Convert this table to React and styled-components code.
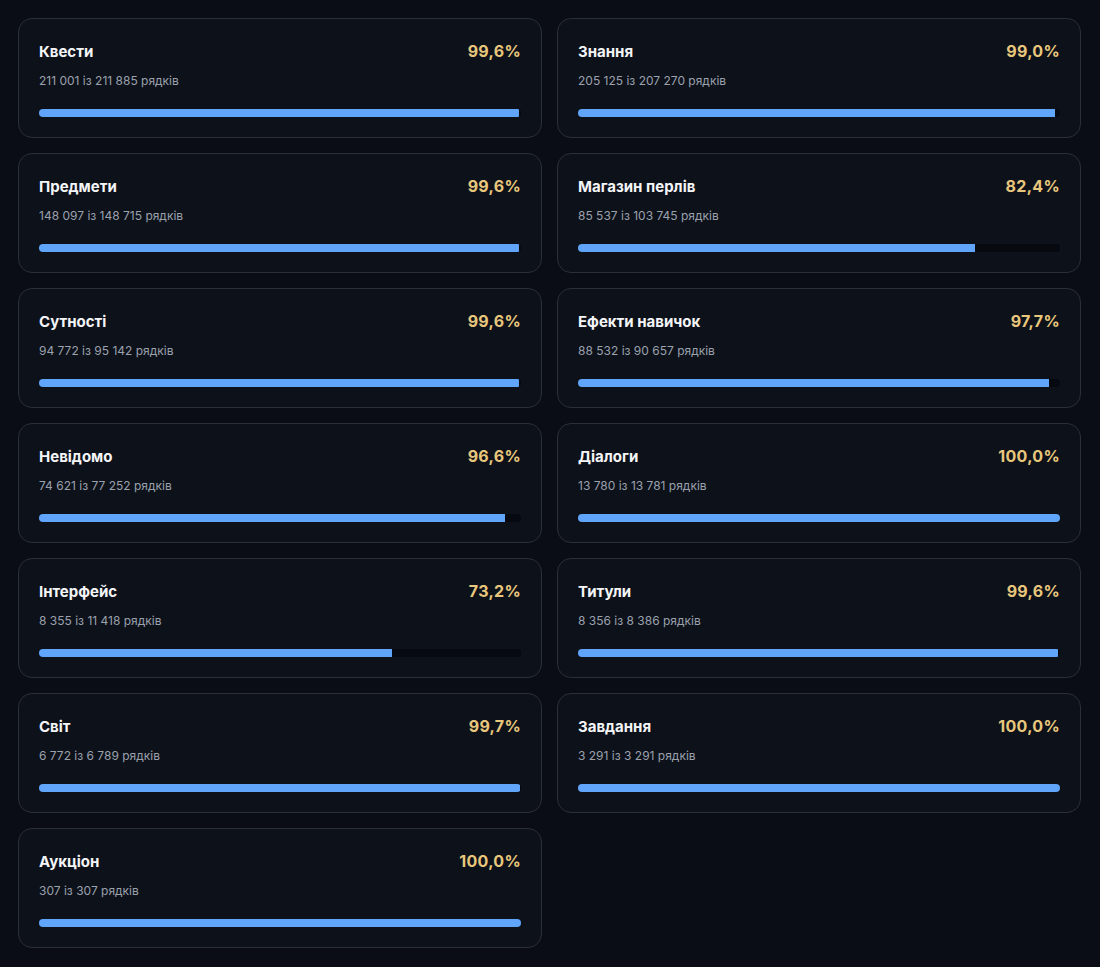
import React from 'react';
import styled, { createGlobalStyle } from 'styled-components';

const GlobalStyle = createGlobalStyle`
  html, body {
    margin: 0;
    background: #0a0d15;
  }
  body {
    font-family: Inter, "Noto Sans", sans-serif;
    color: #fff;
  }
`;

const data = [
  ['Квести', '211 001', '211 885', 99.6],
  ['Знання', '205 125', '207 270', 99.0],
  ['Предмети', '148 097', '148 715', 99.6],
  ['Магазин перлів', '85 537', '103 745', 82.4],
  ['Сутності', '94 772', '95 142', 99.6],
  ['Ефекти навичок', '88 532', '90 657', 97.7],
  ['Невідомо', '74 621', '77 252', 96.6],
  ['Діалоги', '13 780', '13 781', 100.0],
  ['Інтерфейс', '8 355', '11 418', 73.2],
  ['Титули', '8 356', '8 386', 99.6],
  ['Світ', '6 772', '6 789', 99.7],
  ['Завдання', '3 291', '3 291', 100.0],
  ['Аукціон', '307', '307', 100.0],
];

const Page = styled.div`
  padding: 18px 19px 19px 18px;
`;

const Grid = styled.div`
  display: grid;
  grid-template-columns: 524px 524px;
  gap: 15px;
`;

const Card = styled.div`
  background: #0d111a;
  border: 1px solid #2a2f39;
  border-radius: 14px;
  padding: 20px;
  box-sizing: border-box;
  height: 120px;
`;

const Head = styled.div`
  display: flex;
  justify-content: space-between;
  align-items: center;
  height: 24px;
`;

const Title = styled.div`
  font-size: 15px;
  font-weight: 700;
  color: #f4f5f7;
`;

const Percent = styled.div`
  font-size: 16px;
  font-weight: 700;
  color: #e8c77c;
  letter-spacing: 0.3px;
`;

const Sub = styled.div`
  margin-top: 9px;
  font-size: 12px;
  line-height: 18px;
  color: #9ba1ad;
`;

const Track = styled.div`
  margin-top: 19px;
  height: 8px;
  border-radius: 999px;
  background: #060910;
  overflow: hidden;
`;

const Fill = styled.div`
  height: 100%;
  background: #60a5fa;
`;

const fmt = (n) => n.toFixed(1).replace('.', ',') + '%';

export default function App() {
  return (
    <Page>
      <GlobalStyle />
      <Grid>
        {data.map(([name, done, total, pct]) => (
          <Card key={name}>
            <Head>
              <Title>{name}</Title>
              <Percent>{fmt(pct)}</Percent>
            </Head>
            <Sub>
              {done} із {total} рядків
            </Sub>
            <Track>
              <Fill style={{ width: pct + '%' }} />
            </Track>
          </Card>
        ))}
      </Grid>
    </Page>
  );
}
